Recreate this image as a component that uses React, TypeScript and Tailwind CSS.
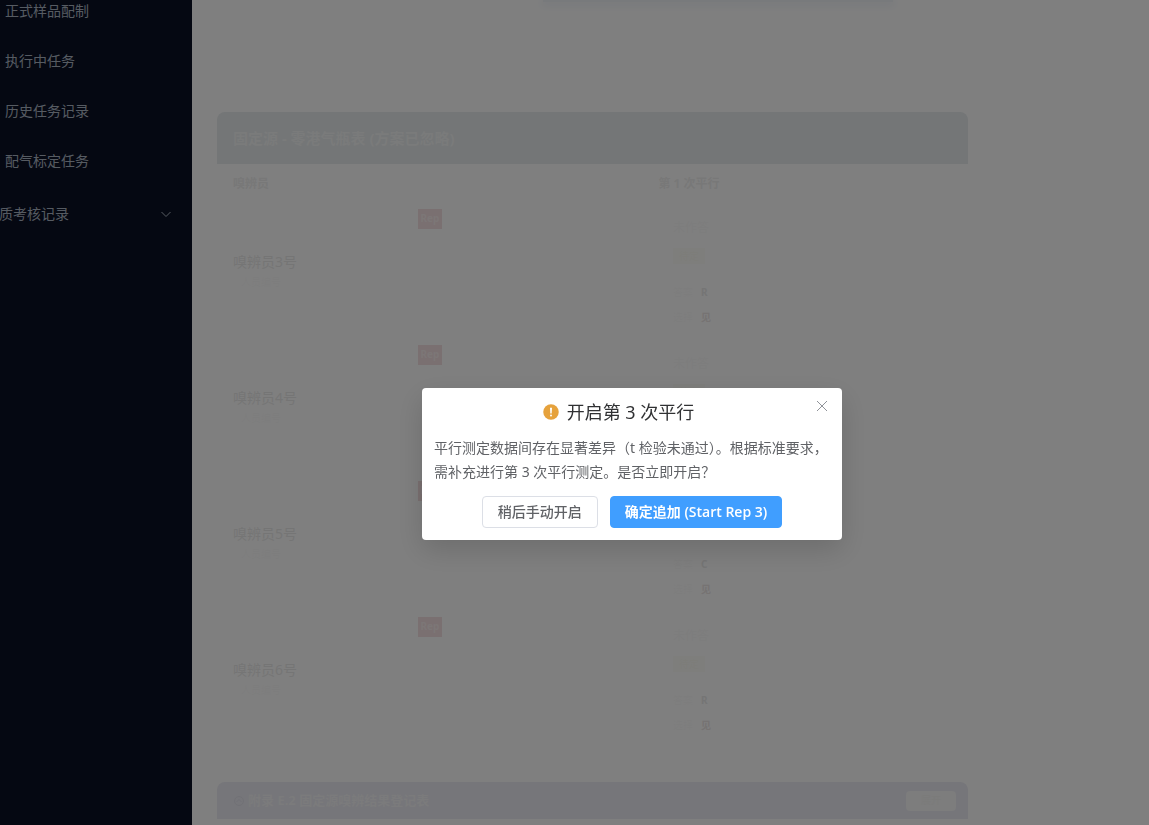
import React, { useState } from 'react';

interface Assessor {
    name: string;
    order: string;
    answer: string;
    choice: string;
}

const MENU_ITEMS = ['正式样品配制', '执行中任务', '历史任务记录', '配气标定任务'];

const ASSESSORS: Assessor[] = [
    { name: '嗅辨员3号', order: '人员编号', answer: 'R', choice: '见' },
    { name: '嗅辨员4号', order: '人员编号', answer: 'R', choice: '见' },
    { name: '嗅辨员5号', order: '人员编号', answer: 'C', choice: '见' },
    { name: '嗅辨员6号', order: '人员编号', answer: 'R', choice: '见' },
];

const Sidebar: React.FC = () => (
    <nav className="w-48 shrink-0 overflow-hidden bg-[#0a1124] text-sm text-[#adb6c4]">
        <div className="-mt-[14px]">
            {MENU_ITEMS.map((item) => (
                <a key={item} href="#" className="flex h-[50px] items-center pl-[5px]">
                    {item}
                </a>
            ))}
            <button type="button" className="-ml-px flex h-14 w-full items-center justify-between pr-[19px]">
                质考核记录
                <svg viewBox="0 0 12 12" className="h-3 w-3" fill="none" stroke="currentColor">
                    <path d="M1.5 4 6 8.5 10.5 4" />
                </svg>
            </button>
        </div>
    </nav>
);

const RecordTable: React.FC = () => (
    <section>
        <h2 className="flex h-[52px] items-center rounded-t-lg bg-[#e8ecee] px-4 text-[15px] font-bold text-[#f4f6f6]">
            固定源 - 零港气瓶表 (方案已忽略)
        </h2>
        <table className="w-full table-fixed text-xs">
            <thead>
                <tr className="h-10 text-[#f0f0f0]">
                    <th className="w-[185px] px-4 text-left font-bold">嗅辨员</th>
                    <th className="w-14" />
                    <th className="text-center font-bold">第 1 次平行</th>
                    <th className="w-12" />
                </tr>
            </thead>
            <tbody>
                {ASSESSORS.map((row) => (
                    <tr key={row.name} className="h-[136px]">
                        <td className="px-4">
                            <div className="text-sm leading-5 text-[#ebebeb]">{row.name}</div>
                            <div className="pl-2 text-[10px] leading-5 text-[#fbfbfb]">{row.order}</div>
                        </td>
                        <td className="px-4 align-top">
                            <span className="mt-[5px] flex h-5 w-6 items-center justify-center bg-[#f4e0e2] text-[10px] font-bold text-[#f9eeee]">
                                Rep
                            </span>
                        </td>
                        <td className="align-middle">
                            <div className="mx-auto flex w-8 flex-col gap-[9px] leading-4 whitespace-nowrap">
                                <div className="text-[#fafafa]">未作答</div>
                                <div className="mt-[3px] mb-[11px] h-4 bg-[#fdfdf9] text-center text-[10px] text-[#fafaf3]">
                                    待定
                                </div>
                                <div className="flex gap-2 text-[10px] text-[#fbfbfb]">
                                    答案<b className="text-[10px] leading-4 text-[#ebebeb]">{row.answer}</b>
                                </div>
                                <div className="flex gap-2 text-[10px] text-[#fbfbfb]">
                                    选择<b className="leading-4 text-[#ece6e6]">{row.choice}</b>
                                </div>
                            </div>
                        </td>
                        <td />
                    </tr>
                ))}
            </tbody>
        </table>
    </section>
);

const AppendixBar: React.FC = () => (
    <section className="mt-[34px] flex h-[37px] items-center rounded-t-lg bg-[#ececf4] px-3 text-[13px]">
        <svg viewBox="0 0 12 12" className="ml-1 h-3 w-3 text-[#e3e3ed]" fill="none" stroke="currentColor">
            <circle cx="6" cy="6" r="4.5" />
            <path d="M3.5 7 6 4.5 8.5 7" />
        </svg>
        <h3 className="ml-[3px] font-bold text-[#f6f6f8]">附录 E.2 固定源嗅辨结果登记表</h3>
        <button type="button" className="ml-auto h-5 w-[50px] rounded bg-[#fafafa] text-[10px] text-[#f7f7f5]">
            展开
        </button>
    </section>
);

const ConfirmDialog: React.FC<{ onClose: () => void }> = ({ onClose }) => (
    <div className="fixed inset-0 flex items-center justify-center bg-black/50 pt-[103px] pl-[115px]">
        <div
            role="dialog"
            aria-labelledby="dialog-title"
            className="relative w-[420px] rounded bg-white p-3 shadow-[0_10px_28px_rgba(0,0,0,0.15)]"
        >
            <button type="button" aria-label="关闭" onClick={onClose} className="absolute top-3 right-[14px] text-[#909399]">
                <svg viewBox="0 0 12 12" className="h-3 w-3" fill="none" stroke="currentColor">
                    <path d="M1 1 11 11M11 1 1 11" />
                </svg>
            </button>
            <div className="flex h-6 items-center justify-center gap-2 pr-[27px]">
                <svg viewBox="0 0 16 16" className="h-4 w-4">
                    <circle cx="8" cy="8" r="7.75" fill="#e6a23c" />
                    <path d="M7 3.8h2L8.7 9.4H7.3z" fill="#fff" />
                    <circle cx="8" cy="11.5" r="1" fill="#fff" />
                </svg>
                <h1 id="dialog-title" className="text-lg leading-6 text-[#303133]">
                    开启第 3 次平行
                </h1>
            </div>
            <p className="mt-3 text-sm leading-6 text-[#606266]">
                平行测定数据间存在显著差异（t 检验未通过）。根据标准要求，需补充进行第 3 次平行测定。是否立即开启？
            </p>
            <div className="mt-3 flex justify-center gap-3 text-sm font-medium">
                <button
                    type="button"
                    onClick={onClose}
                    className="h-8 rounded border border-[#dcdfe6] px-[15px] text-[#606266]"
                >
                    稍后手动开启
                </button>
                <button
                    type="button"
                    onClick={onClose}
                    className="h-8 rounded border border-[#409eff] bg-[#409eff] px-[14px] font-['Open_Sans','Noto_Sans_CJK_SC',sans-serif] font-semibold text-white"
                >
                    确定追加 (Start Rep 3)
                </button>
            </div>
        </div>
    </div>
);

export default function App() {
    const [open, setOpen] = useState(true);

    return (
        <div className="flex min-h-screen bg-white font-['Noto_Sans','Noto_Sans_CJK_SC',sans-serif]">
            <Sidebar />
            <main className="min-w-0 flex-1 overflow-hidden px-[25px]">
                <div className="flex h-28 max-w-[751px] justify-end pr-[75px]">
                    <div className="h-0.5 w-[350px] bg-[#f1f4f8] shadow-[0_2px_8px_2px_#eef2f8]" />
                </div>
                <div className="max-w-[751px]">
                    <RecordTable />
                    <AppendixBar />
                </div>
            </main>
            {open && <ConfirmDialog onClose={() => setOpen(false)} />}
        </div>
    );
}
